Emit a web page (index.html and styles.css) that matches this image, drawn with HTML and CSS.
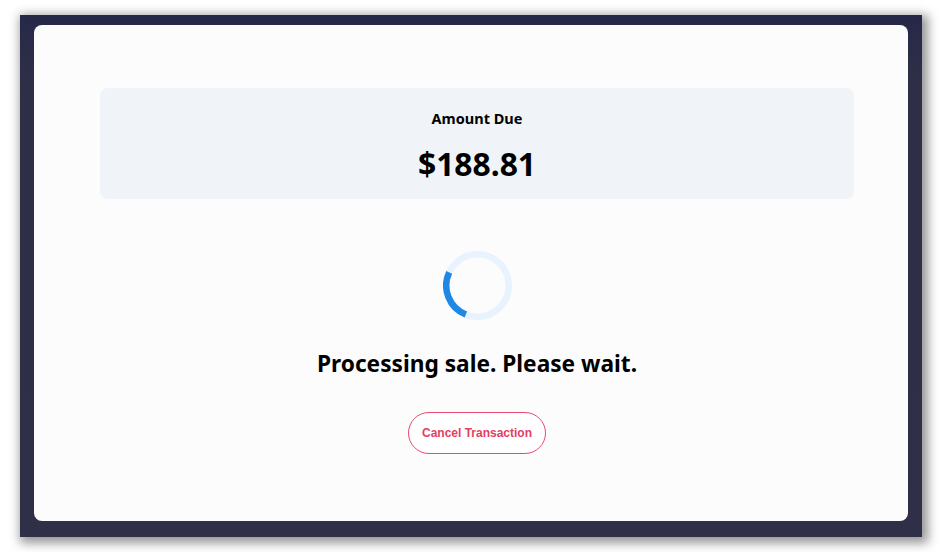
FILE: index.html
```html
<!DOCTYPE html>
<html lang="en">
<head>
<meta charset="utf-8">
<title>Processing sale</title>
<link rel="stylesheet" href="styles.css">
</head>
<body>
<div class="page">
  <div class="window">
    <main class="card">
      <section class="amount-box">
        <div class="amount-label">Amount Due</div>
        <div class="amount-value">$188.81</div>
      </section>
      <svg class="spinner" width="69" height="69" viewBox="0 0 69 69" aria-hidden="true">
        <circle cx="34.5" cy="34.5" r="31.25" fill="none" stroke="#e8f3fd" stroke-width="6.5"/>
        <path d="M 6.2 21.3 A 31.25 31.25 0 0 0 22.8 63.5" fill="none" stroke="#1e88e5" stroke-width="6.5"/>
      </svg>
      <h1 class="status">Processing sale. Please wait.</h1>
      <button class="cancel-btn" type="button">Cancel Transaction</button>
    </main>
  </div>
</div>
</body>
</html>
```
FILE: styles.css
```css
html, body {
  margin: 0;
  padding: 0;
  background: #ffffff;
}

.page {
  box-sizing: border-box;
  width: 942px;
  height: 552px;
  padding: 15px 0 0 20px;
}

.window {
  box-sizing: border-box;
  width: 902px;
  height: 522px;
  padding: 10px 14px 16px 14px;
  background: linear-gradient(180deg, #262848 0%, #2e2f47 12%, #2f3047 100%);
  box-shadow: 3px 3px 10px 3px rgba(0, 0, 0, 0.42);
}

.card {
  box-sizing: border-box;
  height: 496px;
  padding: 63px 54px 0 66px;
  background: #fcfcfd;
  border-radius: 8px;
  display: flex;
  flex-direction: column;
  align-items: center;
  font-family: "Noto Sans", "Open Sans", sans-serif;
  color: #000;
}

.amount-box {
  box-sizing: border-box;
  width: 100%;
  height: 111px;
  padding-top: 19px;
  background: #f0f4f8;
  border-radius: 8px;
  text-align: center;
}

.amount-label {
  font-size: 14.5px;
  font-weight: 700;
  line-height: 22px;
}

.amount-value {
  margin-top: 15px;
  font-size: 31.8px;
  font-weight: 700;
  line-height: 40px;
}

.spinner {
  display: block;
  margin-top: 52px;
}

.status {
  margin: 28px 0 0 0;
  font-size: 22.7px;
  font-weight: 700;
  line-height: 32px;
}

.cancel-btn {
  box-sizing: border-box;
  margin-top: 32px;
  height: 42px;
  padding: 0 13px;
  background: #ffffff;
  border: 1.6px solid #ea4a6e;
  border-radius: 21px;
  font-family: "Liberation Sans", Arial, sans-serif;
  font-size: 12px;
  font-weight: 700;
  color: #e33e63;
  cursor: pointer;
}
```
